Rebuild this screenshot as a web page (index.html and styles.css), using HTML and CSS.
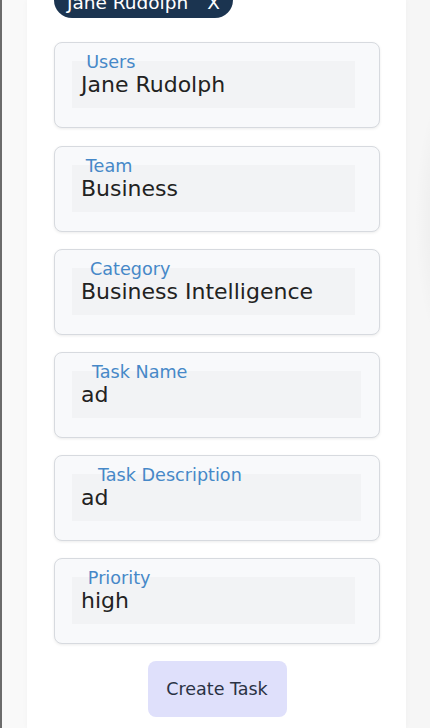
FILE: index.html
```html
<!DOCTYPE html>
<html lang="en">
<head>
<meta charset="utf-8">
<title>Create Task</title>
<link rel="stylesheet" href="styles.css">
</head>
<body>
<div class="page">
  <main class="panel">
    <div class="chip"><span>Jane Rudolph</span><span class="chip-x">X</span></div>
    <div class="field">
      <div class="box">
        <label class="label">Users</label>
        <div class="value">Jane Rudolph</div>
      </div>
    </div>
    <div class="field second">
      <div class="box">
        <label class="label">Team</label>
        <div class="value">Business</div>
      </div>
    </div>
    <div class="field">
      <div class="box">
        <label class="label">Category</label>
        <div class="value">Business Intelligence</div>
      </div>
    </div>
    <div class="field">
      <div class="box wide">
        <label class="label">Task Name</label>
        <div class="value">ad</div>
      </div>
    </div>
    <div class="field">
      <div class="box wide">
        <label class="label">Task Description</label>
        <div class="value">ad</div>
      </div>
    </div>
    <div class="field">
      <div class="box">
        <label class="label">Priority</label>
        <div class="value">high</div>
      </div>
    </div>
    <div class="actions">
      <button class="btn" type="button">Create Task</button>
    </div>
  </main>
</div>
</body>
</html>
```

FILE: styles.css
```css
* { box-sizing: border-box; }
html, body { margin: 0; padding: 0; height: 100%; }
body {
  font-family: "DejaVu Sans", "Open Sans", sans-serif;
  background:
    radial-gradient(ellipse 40px 140px at 455px 220px, rgba(0,0,0,0.07), rgba(0,0,0,0) 100%),
    #f6f6f6;
  overflow: hidden;
}
.page {
  height: 728px;
  border-left: 2px solid #6c6c6c;
  background: linear-gradient(to right, #f9f9f9 0, #f9f9f9 25px, transparent 25px);
  display: flex;
}
.panel {
  margin-left: 25px;
  width: 379px;
  background: #fff;
  padding: 0 26px 0 27px;
  display: flex;
  flex-direction: column;
  box-shadow: 0 0 6px rgba(0,0,0,0.03);
}
.chip {
  margin-top: -18px;
  align-self: flex-start;
  height: 36px;
  padding: 5px 13px 0 13px;
  background: #1b3450;
  color: #fff;
  border-radius: 18px;
  display: flex;
  align-items: center;
  gap: 19px;
  font-size: 18.5px;
}
.field {
  margin-top: 24px;
  width: 326px;
  height: 86px;
  border: 1px solid #d7dadf;
  border-radius: 8px;
  background: #f8f9fb;
  box-shadow: 0 1px 3px rgba(0,0,0,0.08);
  padding: 18px 0 0 17px;
}
.field + .field { margin-top: 17px; }
.field.second { margin-top: 18px; }
.box {
  width: 283px;
  height: 47px;
  background: #f2f3f5;
  display: flex;
  flex-direction: column;
  align-items: flex-start;
  padding-left: 9px;
}
.box.wide { width: 289px; }
.label {
  font-size: 22px;
  line-height: 20px;
  color: #4688c8;
  transform: scale(0.8);
  margin-top: -9px;
  margin-left: -1px;
}
.value {
  font-size: 22px;
  line-height: 26px;
  color: #222;
  margin-top: 0;
}
.actions {
  display: flex;
  justify-content: center;
  margin-top: 17px;
}
.btn {
  width: 139px;
  height: 56px;
  border: none;
  border-radius: 8px;
  background: #dfe0fb;
  color: #2a3244;
  font-family: inherit;
  font-size: 17.5px;
}
```
